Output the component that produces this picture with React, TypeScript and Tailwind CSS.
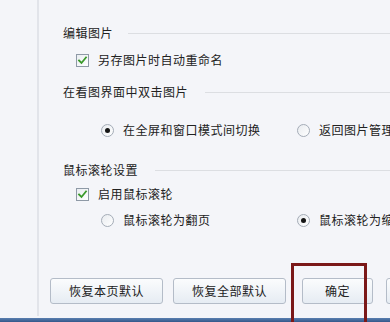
import React from "react";

const font = {
  fontFamily: '"Noto Sans CJK SC", "Noto Sans", sans-serif',
};

function Check() {
  return (
    <div className="w-[13px] h-[13px] border border-[#8e99a6] bg-gradient-to-br from-[#e9edf1] to-white flex items-center justify-center shrink-0">
      <svg width="11" height="11" viewBox="0 0 11 11">
        <path d="M2 5.5 L4.5 8 L9 2.5" fill="none" stroke="#3a9a2a" strokeWidth="1.8" strokeLinecap="square" />
      </svg>
    </div>
  );
}

function Radio({ on }: { on?: boolean }) {
  return (
    <div className="w-[13px] h-[13px] rounded-full border border-[#a4acb7] bg-gradient-to-br from-[#e8ebef] to-white flex items-center justify-center shrink-0">
      {on && <div className="w-[5px] h-[5px] rounded-full bg-[#151515]" />}
    </div>
  );
}

function Heading({ text, gap }: { text: string; gap: number }) {
  return (
    <div className="flex items-center h-[16px] pl-[24px]">
      <span className="text-[12px] tracking-[0.5px] text-[#222] leading-none">{text}</span>
      <div className="flex-1 h-px bg-[#dcdee2]" style={{ marginLeft: gap }} />
    </div>
  );
}

function Btn({ text, w, ml }: { text: string; w: number; ml: number }) {
  return (
    <div
      className="h-[26px] shrink-0 rounded-[3px] border border-[#b4bcc8] bg-gradient-to-b from-[#fbfcfd] to-[#e6ecf3] flex items-center justify-center text-[12px] tracking-[0.5px] text-[#222]"
      style={{ width: w, marginLeft: ml }}
    >
      {text}
    </div>
  );
}

export default function App() {
  return (
    <div className="relative w-[390px] h-[322px] bg-[#f4f5f9] overflow-hidden flex flex-col whitespace-nowrap" style={font}>
      <div className="flex-1 flex flex-row">
        <div className="w-[37px] shrink-0 bg-[#f4f5f9]" />
        <div className="w-[2px] shrink-0 bg-[#e2e4ea] mb-[2px]" />
        <div className="flex-1 flex flex-col pt-[25px]">
          <Heading text="编辑图片" gap={15} />
          <div className="flex items-center h-[16px] mt-[11px] pl-[37px]">
            <Check />
            <span className="ml-[9px] text-[12px] tracking-[0.5px] text-[#222]">另存图片时自动重命名</span>
          </div>
          <div className="mt-[16px]">
            <Heading text="在看图界面中双击图片" gap={17} />
          </div>
          <div className="flex items-center h-[16px] mt-[22px] pl-[62px]">
            <div className="flex items-center w-[196px] shrink-0">
              <Radio on />
              <span className="ml-[9px] text-[12px] tracking-[0.5px] text-[#222]">在全屏和窗口模式间切换</span>
            </div>
            <div className="flex items-center shrink-0">
              <Radio />
              <span className="ml-[9px] text-[12px] tracking-[0.5px] text-[#222]">返回图片管理</span>
            </div>
          </div>
          <div className="mt-[24px]">
            <Heading text="鼠标滚轮设置" gap={17} />
          </div>
          <div className="flex items-center h-[16px] mt-[8px] pl-[37px]">
            <Check />
            <span className="ml-[9px] text-[12px] tracking-[0.5px] text-[#222]">启用鼠标滚轮</span>
          </div>
          <div className="flex items-center h-[16px] mt-[10px] pl-[62px]">
            <div className="flex items-center w-[196px] shrink-0">
              <Radio />
              <span className="ml-[9px] text-[12px] tracking-[0.5px] text-[#222]">鼠标滚轮为翻页</span>
            </div>
            <div className="flex items-center shrink-0">
              <Radio on />
              <span className="ml-[9px] text-[12px] tracking-[0.5px] text-[#222]">鼠标滚轮为缩放</span>
            </div>
          </div>
          <div className="flex flex-row mt-[50px]">
            <Btn text="恢复本页默认" w={113} ml={11} />
            <Btn text="恢复全部默认" w={113} ml={10} />
            <Btn text="确定" w={71} ml={16} />
            <Btn text="取消" w={71} ml={13} />
          </div>
        </div>
      </div>
      <div className="h-[4px] bg-gradient-to-b from-[#5a7fb0] to-[#34578a]" />
      <div className="absolute left-[291px] top-[263px] w-[76px] h-[80px] border-[3px] border-[#7b1818]" />
    </div>
  );
}
